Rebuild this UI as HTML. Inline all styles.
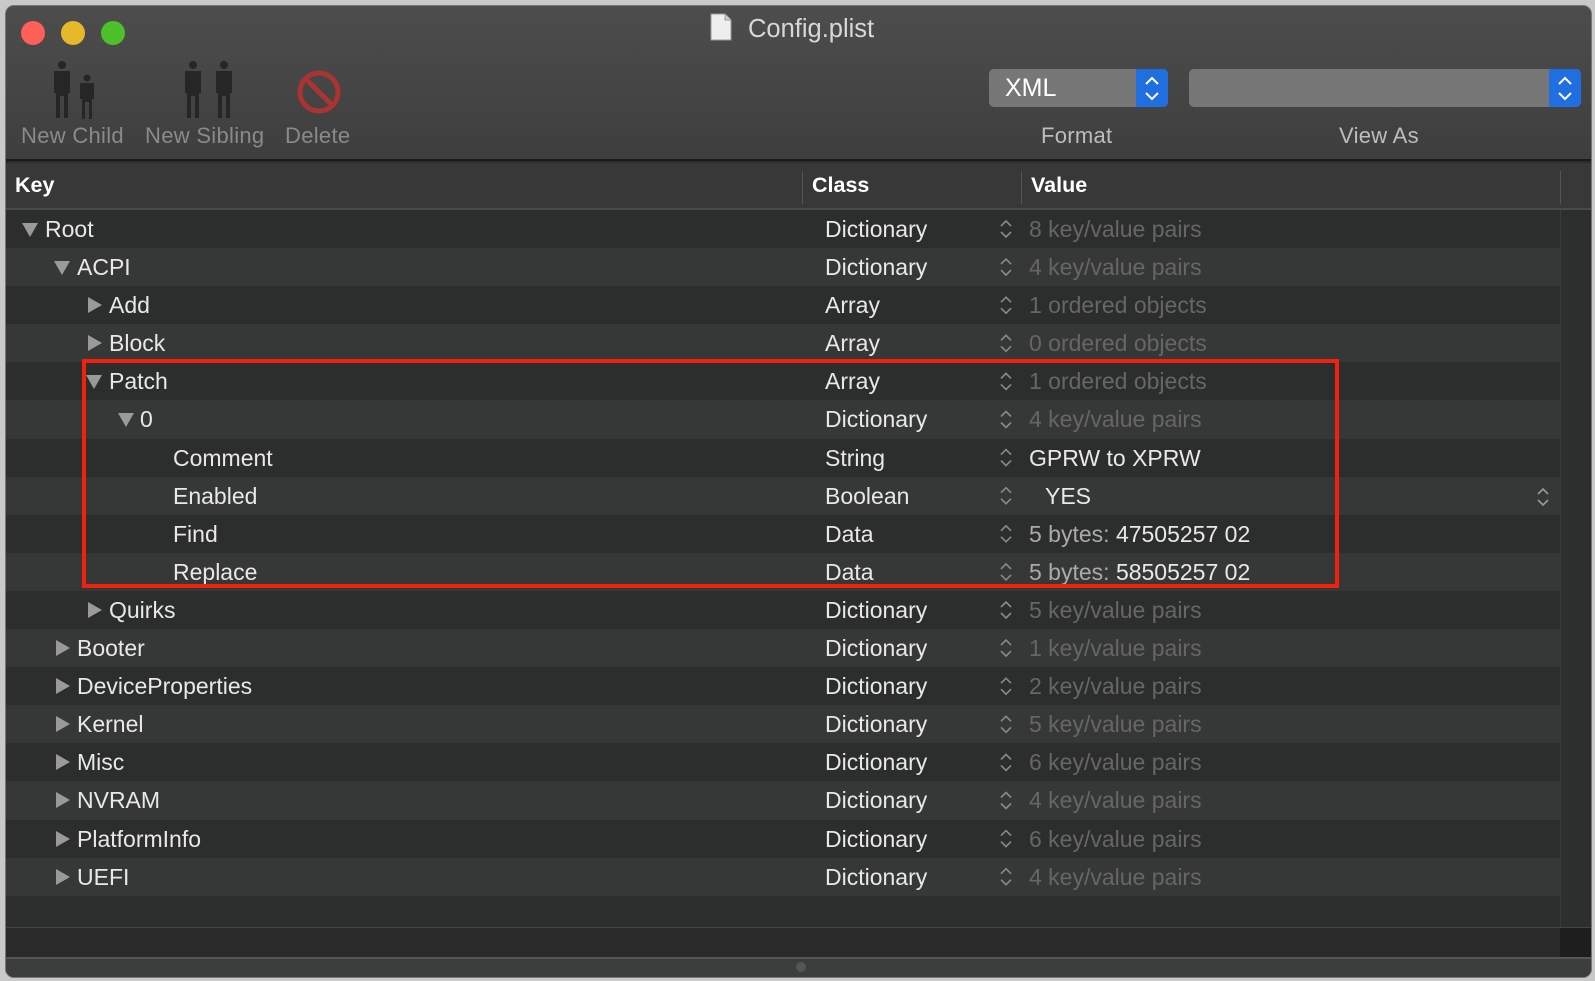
<!DOCTYPE html>
<html><head><meta charset="utf-8"><style>
*{margin:0;padding:0;box-sizing:border-box}
body{width:1595px;height:981px;background:#c9c9c9;font-family:"Liberation Sans",Helvetica,Arial,sans-serif;position:relative;overflow:hidden}
#win{position:absolute;left:5px;top:5px;width:1587px;height:973px;background:#2b2c2c;border-radius:9px;overflow:hidden;border:1px solid #777}
#tb{position:absolute;left:0;top:0;width:100%;height:155px;background:linear-gradient(#4d4d4d,#3e3e3e);border-bottom:2px solid #1a1a1a}
.dot{position:absolute;top:15px;width:24px;height:24px;border-radius:50%}
.title{position:absolute;top:9px;left:742px;color:#d8d8d8;font-size:25.5px}
.tl{position:absolute;top:117px;color:#8a8a8a;font-size:22px;letter-spacing:0.3px}
.pop{position:absolute;top:63px;height:38px;background:#767776;border-radius:5px}
.pop .bl{position:absolute;right:0;top:0;width:32px;height:38px;background:#1f6fe0;border-radius:0 5px 5px 0}
#hdr{position:absolute;top:157px;left:0;width:100%;height:47px;background:#383838;border-bottom:2px solid #4a4a4a}
.hd{position:absolute;top:10px;color:#fff;font-size:21.5px;font-weight:bold}
.vs{position:absolute;top:8px;width:1px;height:33px;background:#555}
#rows{position:absolute;top:204px;left:0;width:1554px}
.r{position:relative;height:38.1px;color:#e8e8e8;font-size:23px}
.r:nth-child(odd){background:#2c2d2d}.r:nth-child(even){background:#363737}
.r span{position:absolute;top:6px;white-space:nowrap}
.g{color:#666}
.tri{position:absolute;top:11px;width:0;height:0}
.dn{border-left:8px solid transparent;border-right:8px solid transparent;border-top:14px solid #9a9a9a;top:13px}
.rt{border-top:8px solid transparent;border-bottom:8px solid transparent;border-left:14px solid #9a9a9a;top:11px}
#sb{position:absolute;left:1554px;top:204px;width:33px;height:718px;background:#2d2e2e;border-left:1px solid #3a3a3a}
#box{position:absolute;left:76px;top:353px;width:1257px;height:229px;border:4px solid #f2210e}
</style></head><body>
<div id="win">
<div id="tb">
<div class="dot" style="left:15px;background:#fe5f57"></div>
<div class="dot" style="left:55px;background:#e6b92a"></div>
<div class="dot" style="left:95px;background:#4cc12c"></div>
<svg style="position:absolute;left:704px;top:7px" width="22" height="28"><path d="M1 1h14l6 6v20H1z" fill="#eee" stroke="#999"/><path d="M15 1v6h6" fill="#ccc" stroke="#999"/></svg>
<div class="title">Config.plist</div>
<svg style="position:absolute;left:44px;top:54px" width="50" height="60" fill="#262626"><circle cx="12" cy="5" r="4"/><path d="M4 11h16v22h-2v25h-4V36h-4v22H6V33H4z"/><circle cx="37" cy="18" r="3.5"/><path d="M30 23h14v16h-2v20h-3V42h-4v17h-3V39h-2z"/></svg>
<svg style="position:absolute;left:175px;top:54px" width="60" height="60" fill="#262626"><circle cx="12" cy="5" r="4"/><path d="M4 11h16v22h-2v25h-4V36h-4v22H6V33H4z"/><circle cx="43" cy="5" r="4"/><path d="M35 11h16v22h-2v25h-4V36h-4v22h-4V33h-2z"/></svg>
<svg style="position:absolute;left:290px;top:63px" width="48" height="46"><circle cx="23" cy="23" r="19" fill="none" stroke="#a33" stroke-width="5"/><path d="M10 10L36 36" stroke="#a33" stroke-width="5"/></svg>
<div class="tl" style="left:15px">New Child</div>
<div class="tl" style="left:139px">New Sibling</div>
<div class="tl" style="left:279px">Delete</div>
<div class="pop" style="left:983px;width:179px"><span style="position:absolute;left:16px;top:5px;color:#fff;font-size:25px">XML</span><div class="bl"><svg width="32" height="38"><path d="M10 15l6-6 6 6M10 24l6 6 6-6" stroke="#fff" stroke-width="2" fill="none"/></svg></div></div>
<div class="pop" style="left:1183px;width:392px"><div class="bl"><svg width="32" height="38"><path d="M10 15l6-6 6 6M10 24l6 6 6-6" stroke="#fff" stroke-width="2" fill="none"/></svg></div></div>
<div class="tl" style="left:1035px;color:#bdbdbd">Format</div>
<div class="tl" style="left:1333px;color:#bdbdbd">View As</div>
</div>
<div id="hdr">
<div class="hd" style="left:9px">Key</div>
<div class="vs" style="left:796px"></div>
<div class="hd" style="left:806px">Class</div>
<div class="vs" style="left:1015px"></div>
<div class="hd" style="left:1025px">Value</div>
<div class="vs" style="left:1554px"></div>
</div>
<div id="rows">
<div class="r"><i class="tri dn" style="left:16px"></i><span style="left:39px">Root</span><span style="left:819px">Dictionary</span><span class="g" style="left:1023px">8 key/value pairs</span></div>
<div class="r"><i class="tri dn" style="left:48px"></i><span style="left:71px">ACPI</span><span style="left:819px">Dictionary</span><span class="g" style="left:1023px">4 key/value pairs</span></div>
<div class="r"><i class="tri rt" style="left:82px"></i><span style="left:103px">Add</span><span style="left:819px">Array</span><span class="g" style="left:1023px">1 ordered objects</span></div>
<div class="r"><i class="tri rt" style="left:82px"></i><span style="left:103px">Block</span><span style="left:819px">Array</span><span class="g" style="left:1023px">0 ordered objects</span></div>
<div class="r"><i class="tri dn" style="left:80px"></i><span style="left:103px">Patch</span><span style="left:819px">Array</span><span class="g" style="left:1023px">1 ordered objects</span></div>
<div class="r"><i class="tri dn" style="left:112px"></i><span style="left:134px">0</span><span style="left:819px">Dictionary</span><span class="g" style="left:1023px">4 key/value pairs</span></div>
<div class="r"><span style="left:167px">Comment</span><span style="left:819px">String</span><span style="left:1023px">GPRW to XPRW</span></div>
<div class="r"><span style="left:167px">Enabled</span><span style="left:819px">Boolean</span><span style="left:1039px">YES</span><svg style="position:absolute;left:1530px;top:9px" width="14" height="22"><path d="M2 8l5-5 5 5M2 14l5 5 5-5" stroke="#999" stroke-width="1.6" fill="none"/></svg></div>
<div class="r"><span style="left:167px">Find</span><span style="left:819px">Data</span><span style="left:1023px"><b style="font-weight:normal;color:#aaa">5 bytes: </b>47505257 02</span></div>
<div class="r"><span style="left:167px">Replace</span><span style="left:819px">Data</span><span style="left:1023px"><b style="font-weight:normal;color:#aaa">5 bytes: </b>58505257 02</span></div>
<div class="r"><i class="tri rt" style="left:82px"></i><span style="left:103px">Quirks</span><span style="left:819px">Dictionary</span><span class="g" style="left:1023px">5 key/value pairs</span></div>
<div class="r"><i class="tri rt" style="left:50px"></i><span style="left:71px">Booter</span><span style="left:819px">Dictionary</span><span class="g" style="left:1023px">1 key/value pairs</span></div>
<div class="r"><i class="tri rt" style="left:50px"></i><span style="left:71px">DeviceProperties</span><span style="left:819px">Dictionary</span><span class="g" style="left:1023px">2 key/value pairs</span></div>
<div class="r"><i class="tri rt" style="left:50px"></i><span style="left:71px">Kernel</span><span style="left:819px">Dictionary</span><span class="g" style="left:1023px">5 key/value pairs</span></div>
<div class="r"><i class="tri rt" style="left:50px"></i><span style="left:71px">Misc</span><span style="left:819px">Dictionary</span><span class="g" style="left:1023px">6 key/value pairs</span></div>
<div class="r"><i class="tri rt" style="left:50px"></i><span style="left:71px">NVRAM</span><span style="left:819px">Dictionary</span><span class="g" style="left:1023px">4 key/value pairs</span></div>
<div class="r"><i class="tri rt" style="left:50px"></i><span style="left:71px">PlatformInfo</span><span style="left:819px">Dictionary</span><span class="g" style="left:1023px">6 key/value pairs</span></div>
<div class="r"><i class="tri rt" style="left:50px"></i><span style="left:71px">UEFI</span><span style="left:819px">Dictionary</span><span class="g" style="left:1023px">4 key/value pairs</span></div>
<div class="r"></div>
</div>
<svg style="position:absolute;left:993px;top:212px" width="14" height="700">
<g stroke="#8a8a8a" stroke-width="1.6" fill="none">
<path d="M2 8l5-5 5 5M2 14l5 5 5-5"/>
<path d="M2 46.1l5-5 5 5M2 52.1l5 5 5-5"/><path d="M2 84.2l5-5 5 5M2 90.2l5 5 5-5"/><path d="M2 122.3l5-5 5 5M2 128.3l5 5 5-5"/><path d="M2 160.4l5-5 5 5M2 166.4l5 5 5-5"/><path d="M2 198.5l5-5 5 5M2 204.5l5 5 5-5"/><path d="M2 236.6l5-5 5 5M2 242.6l5 5 5-5"/><path d="M2 274.7l5-5 5 5M2 280.7l5 5 5-5"/><path d="M2 312.8l5-5 5 5M2 318.8l5 5 5-5"/><path d="M2 350.9l5-5 5 5M2 356.9l5 5 5-5"/><path d="M2 389l5-5 5 5M2 395l5 5 5-5"/><path d="M2 427.1l5-5 5 5M2 433.1l5 5 5-5"/><path d="M2 465.2l5-5 5 5M2 471.2l5 5 5-5"/><path d="M2 503.3l5-5 5 5M2 509.3l5 5 5-5"/><path d="M2 541.4l5-5 5 5M2 547.4l5 5 5-5"/><path d="M2 579.5l5-5 5 5M2 585.5l5 5 5-5"/><path d="M2 617.6l5-5 5 5M2 623.6l5 5 5-5"/><path d="M2 655.7l5-5 5 5M2 661.7l5 5 5-5"/>
</g></svg>
<div id="sb"></div>
<div style="position:absolute;left:0;top:921px;width:100%;height:1px;background:#444"></div>
<div style="position:absolute;left:0;top:922px;width:1554px;height:29px;background:#2a2a2a"></div>
<div style="position:absolute;left:1554px;top:922px;width:33px;height:29px;background:#1e1e1e"></div>
<div style="position:absolute;left:0;top:951px;width:100%;height:22px;background:#3c3d3d;border-top:2px solid #555"></div>
<div style="position:absolute;left:790px;top:956px;width:10px;height:10px;border-radius:50%;background:#555"></div>
<div id="box"></div>
</div>
</body></html>
